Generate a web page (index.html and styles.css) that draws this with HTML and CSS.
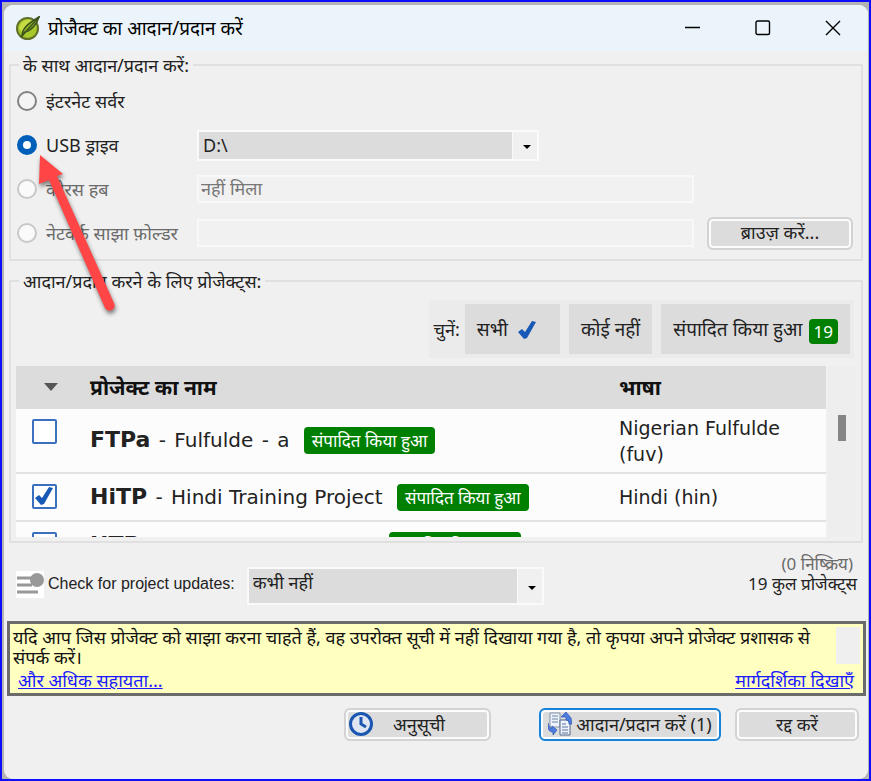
FILE: index.html
```html
<!DOCTYPE html>
<html lang="hi">
<head>
<meta charset="utf-8">
<title>प्रोजैक्ट का आदान/प्रदान करें</title>
<link rel="stylesheet" href="styles.css">
</head>
<body>
<div class="window">
  <header class="titlebar">
    <svg class="app-icon" viewBox="0 0 24 24" aria-hidden="true">
      <circle cx="11.500" cy="12.500" r="10.500" fill="#a9c92b" stroke="#60702a" stroke-width="2"/>
      <path d="M3 12C5 5 10 3 16 4L7 17Z" fill="#c6dc45"/>
      <path d="M6 20C6 13 11 8 23 1C21 8 15 15 9 16Z" fill="#8cae22" stroke="#3d5420" stroke-width="1.500"/>
      <path d="M5 21L24 0" stroke="#3d5420" stroke-width="1.500"/>
    </svg>
    <h1>प्रोजैक्ट का आदान/प्रदान करें</h1>
    <div class="window-controls">
      <button aria-label="Minimize"><svg viewBox="0 0 16 16"><path d="M0 7.500H15"/></svg></button>
      <button aria-label="Maximize"><svg viewBox="0 0 16 16"><rect x="1" y="1" width="13.500" height="13.500" rx="1.500"/></svg></button>
      <button aria-label="Close"><svg viewBox="0 0 16 16"><path d="M1 1L15 15M15 1L1 15"/></svg></button>
    </div>
  </header>

  <main>
    <fieldset class="group">
      <legend>के साथ आदान/प्रदान करें:</legend>
      <div class="targets">
        <label class="choice"><input type="radio" name="target"><span>इंटरनेट सर्वर</span></label>
        <label class="choice"><input type="radio" name="target" checked><span>USB ड्राइव</span></label>
        <div class="combo drive">
          <select aria-label="USB ड्राइव"><option>D:\</option></select>
          <svg viewBox="0 0 8 4" aria-hidden="true"><path d="M0 0H8L4 4Z"/></svg>
        </div>
        <label class="choice off"><input type="radio" name="target" disabled><span>कोरस हब</span></label>
        <input class="field" type="text" value="नहीं मिला" aria-label="कोरस हब" disabled>
        <label class="choice off"><input type="radio" name="target" disabled><span>नेटवर्क साझा फ़ोल्डर</span></label>
        <input class="field" type="text" aria-label="नेटवर्क साझा फ़ोल्डर" disabled>
        <button class="push">ब्राउज़ करें...</button>
      </div>
    </fieldset>

    <fieldset class="group projects">
      <legend>आदान/प्रदान करने के लिए प्रोजेक्ट्स:</legend>
      <div class="toolbar">
        <span>चुनें:</span>
        <button class="flat">सभी <svg class="tick" viewBox="0 0 18 18" aria-hidden="true"><path d="M0 11L4 8L7 11L14 0L18 1L9 17L6 18Z"/></svg></button>
        <button class="flat">कोई नहीं</button>
        <button class="flat">संपादित किया हुआ <span class="badge count">19</span></button>
      </div>
      <div class="list">
        <div class="list-view">
          <table>
            <colgroup><col class="col-check"><col><col class="col-lang"></colgroup>
            <thead>
              <tr>
                <th class="sort"><svg viewBox="0 0 14 8" aria-label="क्रम"><path d="M0 0H14L7 8Z"/></svg></th>
                <th>प्रोजेक्ट का नाम</th>
                <th>भाषा</th>
              </tr>
            </thead>
            <tbody>
              <tr class="tall">
                <td class="check"><input type="checkbox" aria-label="FTPa"></td>
                <td><b>FTPa</b> <span class="dash">-</span> Fulfulde <span class="dash">-</span> a <span class="badge">संपादित किया हुआ</span></td>
                <td class="lang">Nigerian Fulfulde (fuv)</td>
              </tr>
              <tr>
                <td class="check"><span class="ticked"><input type="checkbox" aria-label="HiTP" checked><svg class="tick" viewBox="0 0 18 18" aria-hidden="true"><path d="M0 11L4 8L7 11L14 0L18 1L9 17L6 18Z"/></svg></span></td>
                <td><b>HiTP</b> <span class="dash">-</span> Hindi Training Project <span class="badge">संपादित किया हुआ</span></td>
                <td class="lang">Hindi (hin)</td>
              </tr>
              <tr>
                <td class="check"><input type="checkbox" aria-label="HTP"></td>
                <td><b>HTP</b> <span class="dash">-</span> Hindi Training Project <span class="badge">संपादित किया हुआ</span></td>
                <td class="lang"></td>
              </tr>
            </tbody>
          </table>
        </div>
        <div class="scrollbar"><div class="thumb"></div></div>
      </div>
    </fieldset>

    <div class="updates">
      <svg class="updates-icon" viewBox="0 0 28 27" aria-hidden="true">
        <rect width="28" height="27" fill="#fff"/>
        <path d="M1 7H16M1 14H16M1 21H22" stroke="#989898" stroke-width="3"/>
        <circle cx="21" cy="9" r="7" fill="#989898"/>
      </svg>
      <label for="interval">Check for project updates:</label>
      <div class="combo interval">
        <select id="interval"><option>कभी नहीं</option></select>
        <svg viewBox="0 0 8 4" aria-hidden="true"><path d="M0 0H8L4 4Z"/></svg>
      </div>
      <div class="totals">
        <span class="inactive">(0 निष्क्रिय)</span>
        <span>19 कुल प्रोजेक्ट्स</span>
      </div>
    </div>

    <section class="notice">
      <div class="notice-body">
        <p>यदि आप जिस प्रोजेक्ट को साझा करना चाहते हैं, वह उपरोक्त सूची में नहीं दिखाया गया है, तो कृपया अपने प्रोजेक्ट प्रशासक से संपर्क करें।</p>
        <div class="notice-scroll"></div>
      </div>
      <nav><a href="#help">और अधिक सहायता...</a><a href="#guide">मार्गदर्शिका दिखाएँ</a></nav>
    </section>

    <footer class="actions">
      <button class="push schedule">
        <svg viewBox="0 0 24 24" aria-hidden="true"><circle cx="12" cy="12" r="10.500" fill="#dfe6f2" stroke="#1b57b0" stroke-width="3"/><path d="M12 5V12L17 15" fill="none" stroke="#1b57b0" stroke-width="3"/></svg>
        <span>अनुसूची</span>
      </button>
      <button class="push primary">
        <svg viewBox="0 0 24 24" aria-hidden="true">
          <path d="M2 1H12V15H2Z" fill="#eef3fa" stroke="#8292ad"/>
          <path d="M4 4H10M4 7H10M4 10H10" stroke="#6d83a8"/>
          <path d="M12 8H19L22 11V23H12Z" fill="#eef3fa" stroke="#53698f"/>
          <path d="M14 12H18M14 15H20M14 18H20M14 21H20" stroke="#5b73a0"/>
          <path d="M13 5L18 0L23 6L24 12H21C21 9 20 8 18 8V5Z" fill="#4d7de0" stroke="#2c55ae" stroke-width=".7"/>
          <path d="M0 11C1 15 2 16 4 16V14L9 18L5 23V20C0 20 0 16 0 11Z" fill="#4d7de0" stroke="#2c55ae" stroke-width=".7"/>
        </svg>
        <span>आदान/प्रदान करें (1)</span>
      </button>
      <button class="push cancel">रद्द करें</button>
    </footer>
  </main>
  <svg class="pointer" viewBox="0 0 90 166" aria-hidden="true"><path d="M10 5L33 24L27 26L84 153A5 5 0 0 1 75 158L19 30L9 34Z"/></svg>
</div>
</body>
</html>
```
FILE: styles.css
```css
* { box-sizing: border-box; }

body {
  margin: 0;
  min-height: 100vh;
  padding: 3px 1px 0 2px;
  border: 2px solid #0d0dff;
  background: #b4b4b4;
  color: #222;
  font: 18px/20px "Noto Sans", "Open Sans", sans-serif;
  display: flex;
}

button, input, select { font: inherit; color: inherit; margin: 0; }

.window {
  position: relative;
  flex: 1;
  min-width: 0;
  background: #f0f0f0;
  border-radius: 9px;
  overflow: hidden;
}

.titlebar {
  height: 46px;
  padding-left: 12px;
  display: flex;
  align-items: center;
  background: #ebf4fa;
  color: #000;
}
.app-icon { width: 24px; height: 24px; margin-right: 8px; }
h1 { flex: 1; margin: 0; font-size: 19px; line-height: 28px; font-weight: 400; }
.window-controls { display: flex; }
.window-controls button {
  width: 70px;
  height: 46px;
  padding: 0;
  border: 0;
  background: none;
}
.window-controls svg { width: 16px; height: 16px; display: block; margin: auto; fill: none; stroke: #000; stroke-width: 1.4; }

main { padding: 2px 5px 0; }

.group {
  min-width: 0;
  margin: 0 0 8px;
  padding: 2px 8px 4px 6px;
  border: 2px solid #e0e0e0;
}
legend { margin-left: 2px; padding: 0 4px; line-height: 24px; }

.targets {
  display: grid;
  grid-template-columns: 180px 342px 1fr 146px;
  grid-auto-rows: 44px;
  align-items: center;
}
.choice { grid-column: 1; display: flex; align-items: center; gap: 9px; white-space: nowrap; }
.choice input {
  appearance: none;
  flex: none;
  width: 20px;
  height: 20px;
  border: 2px solid #828282;
  border-radius: 50%;
  background: #f4f4f4;
}
.choice input:checked { border: 6px solid #005fb8; background: #fff; }
.choice input:disabled { border-color: #c8c8c8; background: #fafafa; }
.off { color: #6b6b6b; }

.combo { position: relative; }
.combo select {
  appearance: none;
  width: 100%;
  height: 31px;
  padding: 0 30px 0 4px;
  border: 2px solid #fafafa;
  border-radius: 0;
  background: linear-gradient(to left, #f0f0f0 24px, #fafafa 24px, #fafafa 25px, #dcdcdc 25px);
}
.combo svg { position: absolute; right: 8px; top: 50%; width: 8px; height: 4px; fill: #000; }
.drive { grid-column: 2; }

.field {
  grid-column: 2 / 4;
  height: 28px;
  margin-right: 13px;
  padding: 0 2px 2px;
  border: 2px solid #f8f8f8;
  background: #f1f1f1;
  color: #777;
}

.push {
  height: 33px;
  padding: 0 3px 2px;
  border: 2px solid #d3d3d3;
  border-radius: 6px;
  background: #dcdcdc;
  box-shadow: inset 0 0 0 2px #fcfcfc;
  display: flex;
  align-items: center;
  justify-content: center;
  white-space: nowrap;
}
.push svg { width: 24px; height: 24px; flex: none; }

.projects { padding: 7px 5px 4px; margin-bottom: 11px; }
.projects legend { margin-left: 3px; }

.toolbar {
  width: fit-content;
  margin: 0 2px 8px auto;
  padding: 4px 4px 4px 5px;
  display: flex;
  align-items: center;
  gap: 9px;
  background: #ebebeb;
}
.toolbar > span { margin-right: -4px; }
.flat {
  height: 50px;
  padding: 0 12px;
  border: 0;
  background: #dcdcdc;
  font-size: 19px;
  display: flex;
  align-items: center;
  gap: 6px;
  white-space: nowrap;
}
.tick { width: 18px; height: 18px; fill: #1859b8; }
.flat .tick { margin: 2px 12px 0 4px; }
.badge {
  display: inline-block;
  margin-left: 8px;
  padding: 0 8px;
  border-radius: 4px;
  background: #008000;
  color: #fff;
  font: 17px/27px "Noto Sans", "Open Sans", sans-serif;
}
.count { margin: 4px 0 0; padding: 0 5px; line-height: 25px; }
.dash { margin: 0 2px; }

.list { display: flex; height: 171px; gap: 2px; overflow: hidden; }
.list-view { flex: 1; min-width: 0; overflow: hidden; background: #fcfcfc; }
.scrollbar { width: 28px; padding: 49px 8px 0 10px; background: #eeeeee; }
.thumb { width: 8px; height: 26px; background: #858585; }

table {
  width: 100%;
  table-layout: fixed;
  border-collapse: collapse;
  font: 20px/26px "DejaVu Sans", "Noto Sans", sans-serif;
}
.col-check { width: 62px; }
.col-lang { width: 219px; }
th {
  height: 43px;
  padding: 0 12px 2px;
  background: #dcdcdc;
  color: #111;
  text-align: left;
  font: 700 21px/26px "Noto Sans", "Open Sans", sans-serif;
}
.sort { padding-left: 28px; }
.sort svg { display: block; width: 14px; height: 8px; fill: #555; }
td { height: 48px; padding: 0 12px; border-bottom: 2px solid #e2e2e2; white-space: nowrap; }
td b { font-size: 22px; }
.tall td { height: 64px; }
td.lang { white-space: normal; font-size: 19px; }
.check { padding: 10px 16px 0; vertical-align: top; }
.check input {
  appearance: none;
  display: block;
  width: 25px;
  height: 25px;
  border: 2px solid #3b70be;
  border-radius: 2px;
  background: #fff;
}
.ticked { position: relative; display: block; width: 25px; }
.ticked .tick { position: absolute; left: 3px; top: 3px; }

.updates { display: flex; align-items: flex-end; padding: 0 6px 0 7px; height: 51px; }
.updates-icon { width: 28px; height: 27px; margin: 0 4px 7px 0; }
.updates label { font: 16px/20px "Liberation Sans", sans-serif; margin-bottom: 11px; white-space: nowrap; }
.interval { width: 297px; margin-left: 12px; }
.interval select { display: block; height: 38px; padding-bottom: 8px; }
.totals { flex: 1; align-self: flex-start; font-size: 17px; display: flex; flex-direction: column; align-items: flex-end; white-space: nowrap; }
.inactive { padding-right: 4px; color: #6b6b6b; }

.notice {
  margin: 16px -3px 12px -2px;
  border: 3px solid #6b6b6b;
  background: #ffffc0;
  color: #111;
}
.notice-body { display: flex; gap: 20px; padding: 3px 3px 0; }
.notice p { flex: 1; margin: 0; }
.notice-scroll { width: 24px; height: 37px; background: #efefef; }
.notice nav { display: flex; justify-content: space-between; padding: 3px 9px 3px 8px; }
a { color: #1a1aff; }

.actions { display: flex; justify-content: flex-end; padding-right: 4px; }
.schedule { width: 147px; margin-right: 48px; justify-content: flex-start; }
.schedule span { margin-left: 20px; }
.primary { width: 182px; margin-right: 14px; gap: 4px; border-color: #1683d8; }
.cancel { width: 124px; }

.pointer {
  position: absolute;
  left: 26px;
  top: 145px;
  width: 90px;
  height: 166px;
  fill: #ff4545;
  filter: drop-shadow(1px 3px 2px rgba(0, 0, 0, .5));
  pointer-events: none;
}
```
